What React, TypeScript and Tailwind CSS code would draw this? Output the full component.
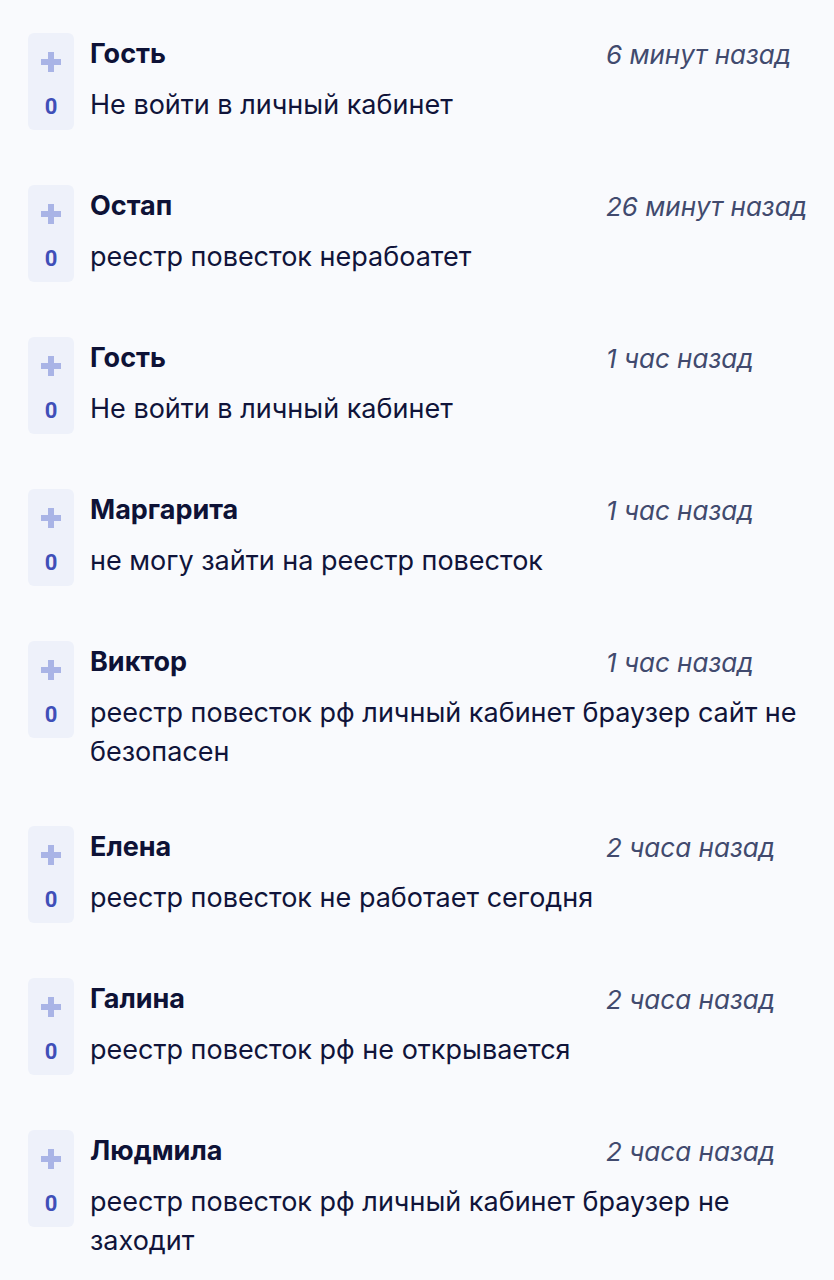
const comments = [
  { name: 'Гость', time: '6 минут назад', text: 'Не войти в личный кабинет' },
  { name: 'Остап', time: '26 минут назад', text: 'реестр повесток нерабоатет' },
  { name: 'Гость', time: '1 час назад', text: 'Не войти в личный кабинет' },
  { name: 'Маргарита', time: '1 час назад', text: 'не могу зайти на реестр повесток' },
  { name: 'Виктор', time: '1 час назад', text: 'реестр повесток рф личный кабинет браузер сайт не безопасен' },
  { name: 'Елена', time: '2 часа назад', text: 'реестр повесток не работает сегодня' },
  { name: 'Галина', time: '2 часа назад', text: 'реестр повесток рф не открывается' },
  { name: 'Людмила', time: '2 часа назад', text: 'реестр повесток рф личный кабинет браузер не заходит' },
];

function PlusIcon() {
  return (
    <svg width="20" height="20" viewBox="0 0 20 20" className="text-[#a9b4e6]">
      <path d="M7 0h6v7h7v6h-7v7H7v-7H0V7h7z" fill="currentColor" />
    </svg>
  );
}

export default function App() {
  return (
    <div className="min-h-screen bg-[#f9fafd] pl-[28px] pr-[24px] pt-[33px] font-['Inter',_sans-serif] text-[#10143a]">
      <div className="flex flex-col gap-[55px]">
        {comments.map((c, i) => (
          <div key={i} className="flex items-start">
            <div className="flex h-[97px] w-[46px] shrink-0 flex-col items-center rounded-md bg-[#eef1fa] pt-[19px]">
              <PlusIcon />
              <span className="mt-[24px] font-['Roboto',_sans-serif] text-[22px] font-bold leading-none text-[#3f4fb8]">0</span>
            </div>
            <div className="ml-[16px] flex-1">
              <div className="flex h-[42px] items-center">
                <span className="w-[516px] text-[27px] font-bold text-[#0e1236]">{c.name}</span>
                <span className="text-[26px] italic text-[#414a6e]">{c.time}</span>
              </div>
              <p className="mt-[10px] text-[27px] leading-[39px]">{c.text}</p>
            </div>
          </div>
        ))}
      </div>
    </div>
  );
}
